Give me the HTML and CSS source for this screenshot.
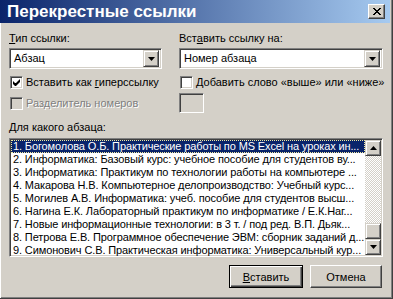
FILE: index.html
```html
<!DOCTYPE html>
<html lang="ru">
<head>
<meta charset="utf-8">
<title>Перекрестные ссылки</title>
<link rel="stylesheet" href="styles.css">
</head>
<body>
<div class="window">
  <div class="titlebar">
    <span class="title">Перекрестные ссылки</span>
    <button class="close" aria-label="Закрыть">
      <svg width="8" height="7" viewBox="0 0 8 7"><path d="M0 0h2v1h1v1h2v-1h1v-1h2v1h-1v1h-1v1h-1v1h1v1h1v1h1v1h-2v-1h-1v-1h-2v1h-1v1h-2v-1h1v-1h1v-1h1v-1h-1v-1h-1v-1h-1z" fill="#000"/></svg>
    </button>
  </div>
  <div class="body">
    <div class="top-grid">
      <div class="col">
        <div class="label"><u>Т</u>ип ссылки:</div>
        <div class="combo combo-left">
          <span class="combo-text">Абзац</span>
          <span class="drop"><svg width="7" height="4" viewBox="0 0 7 4"><path d="M0 0h7l-3.5 4z" fill="#000"/></svg></span>
        </div>
        <div class="check">
          <span class="box"><svg width="7" height="7" viewBox="0 0 7 7"><path d="M0 2v3l2 2h1l4-4v-3l-4 4h-1z" fill="#000"/></svg></span>
          <span>Вставить как <u>г</u>иперссылку</span>
        </div>
        <div class="check disabled check-second">
          <span class="box"></span>
          <span>Разделитель номеров</span>
        </div>
      </div>
      <div class="col">
        <div class="label">Вст<u>а</u>вить ссылку на:</div>
        <div class="combo">
          <span class="combo-text">Номер абзаца</span>
          <span class="drop"><svg width="7" height="4" viewBox="0 0 7 4"><path d="M0 0h7l-3.5 4z" fill="#000"/></svg></span>
        </div>
        <div class="check">
          <span class="box"></span>
          <span><u>Д</u>обавить слово «выше» или «ниже»</span>
        </div>
        <div class="editbox"></div>
      </div>
    </div>
    <div class="label list-label"><u>Д</u>ля какого абзаца:</div>
    <div class="listbox">
      <ul class="items">
        <li class="selected">1. Богомолова О.Б. Практические работы по MS Excel на уроках ин...</li>
        <li>2. Информатика: Базовый курс: учебное пособие для студентов ву...</li>
        <li>3. Информатика: Практикум по технологии работы на компьютере ...</li>
        <li>4. Макарова Н.В. Компьютерное делопроизводство: Учебный курс...</li>
        <li>5. Могилев А.В. Информатика: учеб. пособие для студентов высш...</li>
        <li>6. Нагина Е.К. Лабораторный практикум по информатике / Е.К.Наг...</li>
        <li>7. Новые информационные технологии: в 3 т. / под ред. В.П. Дьяк...</li>
        <li>8. Петрова Е.В. Программное обеспечение ЭВМ: сборник заданий д...</li>
        <li>9. Симонович С.В. Практическая информатика: Универсальный кур...</li>
      </ul>
      <div class="scrollbar">
        <span class="sb-btn"><svg width="7" height="4" viewBox="0 0 7 4"><path d="M3.5 0l3.5 4h-7z" fill="#000"/></svg></span>
        <span class="track"></span>
        <span class="thumb"></span>
        <span class="sb-btn"><svg width="7" height="4" viewBox="0 0 7 4"><path d="M0 0h7l-3.5 4z" fill="#000"/></svg></span>
      </div>
    </div>
    <div class="buttons">
      <button class="btn default"><u>В</u>ставить</button>
      <button class="btn">Отмена</button>
    </div>
  </div>
</div>
</body>
</html>
```
FILE: styles.css
```css
html, body {
  margin: 0;
  padding: 0;
  background: #d4d0c8;
}

.window {
  width: 393px;
  height: 299px;
  box-sizing: border-box;
  background: #d4d0c8;
  border-right: 1px solid #404040;
  border-bottom: 1px solid #404040;
  padding: 0 2px 2px 0;
  box-shadow: inset 1px 0 #ffffff, inset -1px -1px #808080;
  font-family: "Liberation Sans", Arial, sans-serif;
  font-size: 11px;
  color: #000;
  overflow: hidden;
  display: flex;
  flex-direction: column;
}

u {
  text-decoration: underline;
  text-underline-offset: 1px;
}

.titlebar {
  height: 23px;
  flex: none;
  display: flex;
  align-items: center;
  padding: 0 5px 0 7px;
  background: linear-gradient(to right, #0a246a, #a6caf0);
}

.title {
  color: #fff;
  font-weight: bold;
  font-size: 17px;
  line-height: 20px;
}

.close {
  margin-left: auto;
  width: 17px;
  height: 15px;
  padding: 0;
  box-sizing: border-box;
  background: #d4d0c8;
  border: 1px solid;
  border-color: #ffffff #404040 #404040 #ffffff;
  box-shadow: inset -1px -1px #808080;
  display: flex;
  align-items: center;
  justify-content: center;
}

.body {
  flex: 1;
  padding: 9px 7px 0 9px;
  display: flex;
  flex-direction: column;
}

.top-grid {
  display: grid;
  grid-template-columns: 153px 204px;
  column-gap: 17px;
  align-items: start;
}

.col {
  display: flex;
  flex-direction: column;
}

.label {
  height: 13px;
  line-height: 13px;
  white-space: nowrap;
}

.combo {
  margin-top: 3px;
  height: 21px;
  box-sizing: border-box;
  background: #fff;
  border: 1px solid;
  border-color: #808080 #ffffff #ffffff #808080;
  box-shadow: inset 1px 1px #404040, inset -1px -1px #d4d0c8;
  display: flex;
  align-items: center;
  padding: 2px;
}

.combo-text {
  flex: 1;
  padding-left: 2px;
  line-height: 13px;
}

.drop, .sb-btn {
  width: 16px;
  height: 17px;
  box-sizing: border-box;
  background: #d4d0c8;
  border: 1px solid;
  border-color: #d4d0c8 #404040 #404040 #d4d0c8;
  box-shadow: inset 1px 1px #ffffff, inset -1px -1px #808080;
  display: flex;
  align-items: center;
  justify-content: center;
  flex: none;
}

.check {
  margin-top: 7px;
  height: 13px;
  line-height: 13px;
  display: flex;
  align-items: center;
  white-space: nowrap;
}

.check-second {
  margin-top: 8px;
}

.box {
  width: 13px;
  height: 13px;
  box-sizing: border-box;
  margin: 0 3px 0 1px;
  background: #fff;
  border: 1px solid;
  border-color: #808080 #ffffff #ffffff #808080;
  box-shadow: inset 1px 1px #404040, inset -1px -1px #d4d0c8;
  display: flex;
  align-items: center;
  justify-content: center;
  flex: none;
}

.disabled {
  color: #808080;
  text-shadow: 1px 1px #ffffff;
}

.disabled .box {
  background: #d4d0c8;
}

.editbox {
  margin-top: 4px;
  width: 25px;
  height: 20px;
  box-sizing: border-box;
  background: #d4d0c8;
  border: 1px solid;
  border-color: #808080 #ffffff #ffffff #808080;
  box-shadow: inset 1px 1px #404040, inset -1px -1px #d4d0c8;
}

.list-label {
  margin-top: 8px;
}

.listbox {
  margin-top: 4px;
  height: 119px;
  box-sizing: border-box;
  background: #fff;
  border: 1px solid;
  border-color: #808080 #ffffff #ffffff #808080;
  box-shadow: inset 1px 1px #404040, inset -1px -1px #d4d0c8;
  padding: 1px;
  display: flex;
}

.items {
  list-style: none;
  margin: 0;
  padding: 0;
  flex: 1;
  min-width: 0;
}

.items li {
  height: 13px;
  line-height: 13px;
  padding-left: 2px;
  white-space: nowrap;
  overflow: hidden;
  box-sizing: border-box;
  letter-spacing: -0.12px;
}

.items li.selected {
  background: #0a246a;
  color: #fff;
  outline: 1px dotted #f0e8a0;
  outline-offset: -1px;
}

.scrollbar {
  width: 16px;
  display: flex;
  flex-direction: column;
  flex: none;
}

.scrollbar .sb-btn {
  height: 16px;
}

.track {
  flex: 1;
  background: repeating-conic-gradient(#ffffff 0 25%, #d4d0c8 0 50%) 0 0 / 2px 2px;
}

.thumb {
  height: 16px;
  box-sizing: border-box;
  background: #d4d0c8;
  border: 1px solid;
  border-color: #d4d0c8 #404040 #404040 #d4d0c8;
  box-shadow: inset 1px 1px #ffffff, inset -1px -1px #808080;
}

.buttons {
  margin-top: 8px;
  display: flex;
  justify-content: flex-end;
  gap: 7px;
  padding-right: 1px;
}

.btn {
  height: 23px;
  box-sizing: border-box;
  padding: 0;
  font: inherit;
  color: #000;
  background: #d4d0c8;
  border: 1px solid;
  border-color: #ffffff #404040 #404040 #ffffff;
  box-shadow: inset -1px -1px #808080;
  width: 72px;
}

.btn.default {
  width: 74px;
  border-color: #000;
  box-shadow: inset 1px 1px #ffffff, inset -1px -1px #404040, inset -2px -2px #808080;
}
```
